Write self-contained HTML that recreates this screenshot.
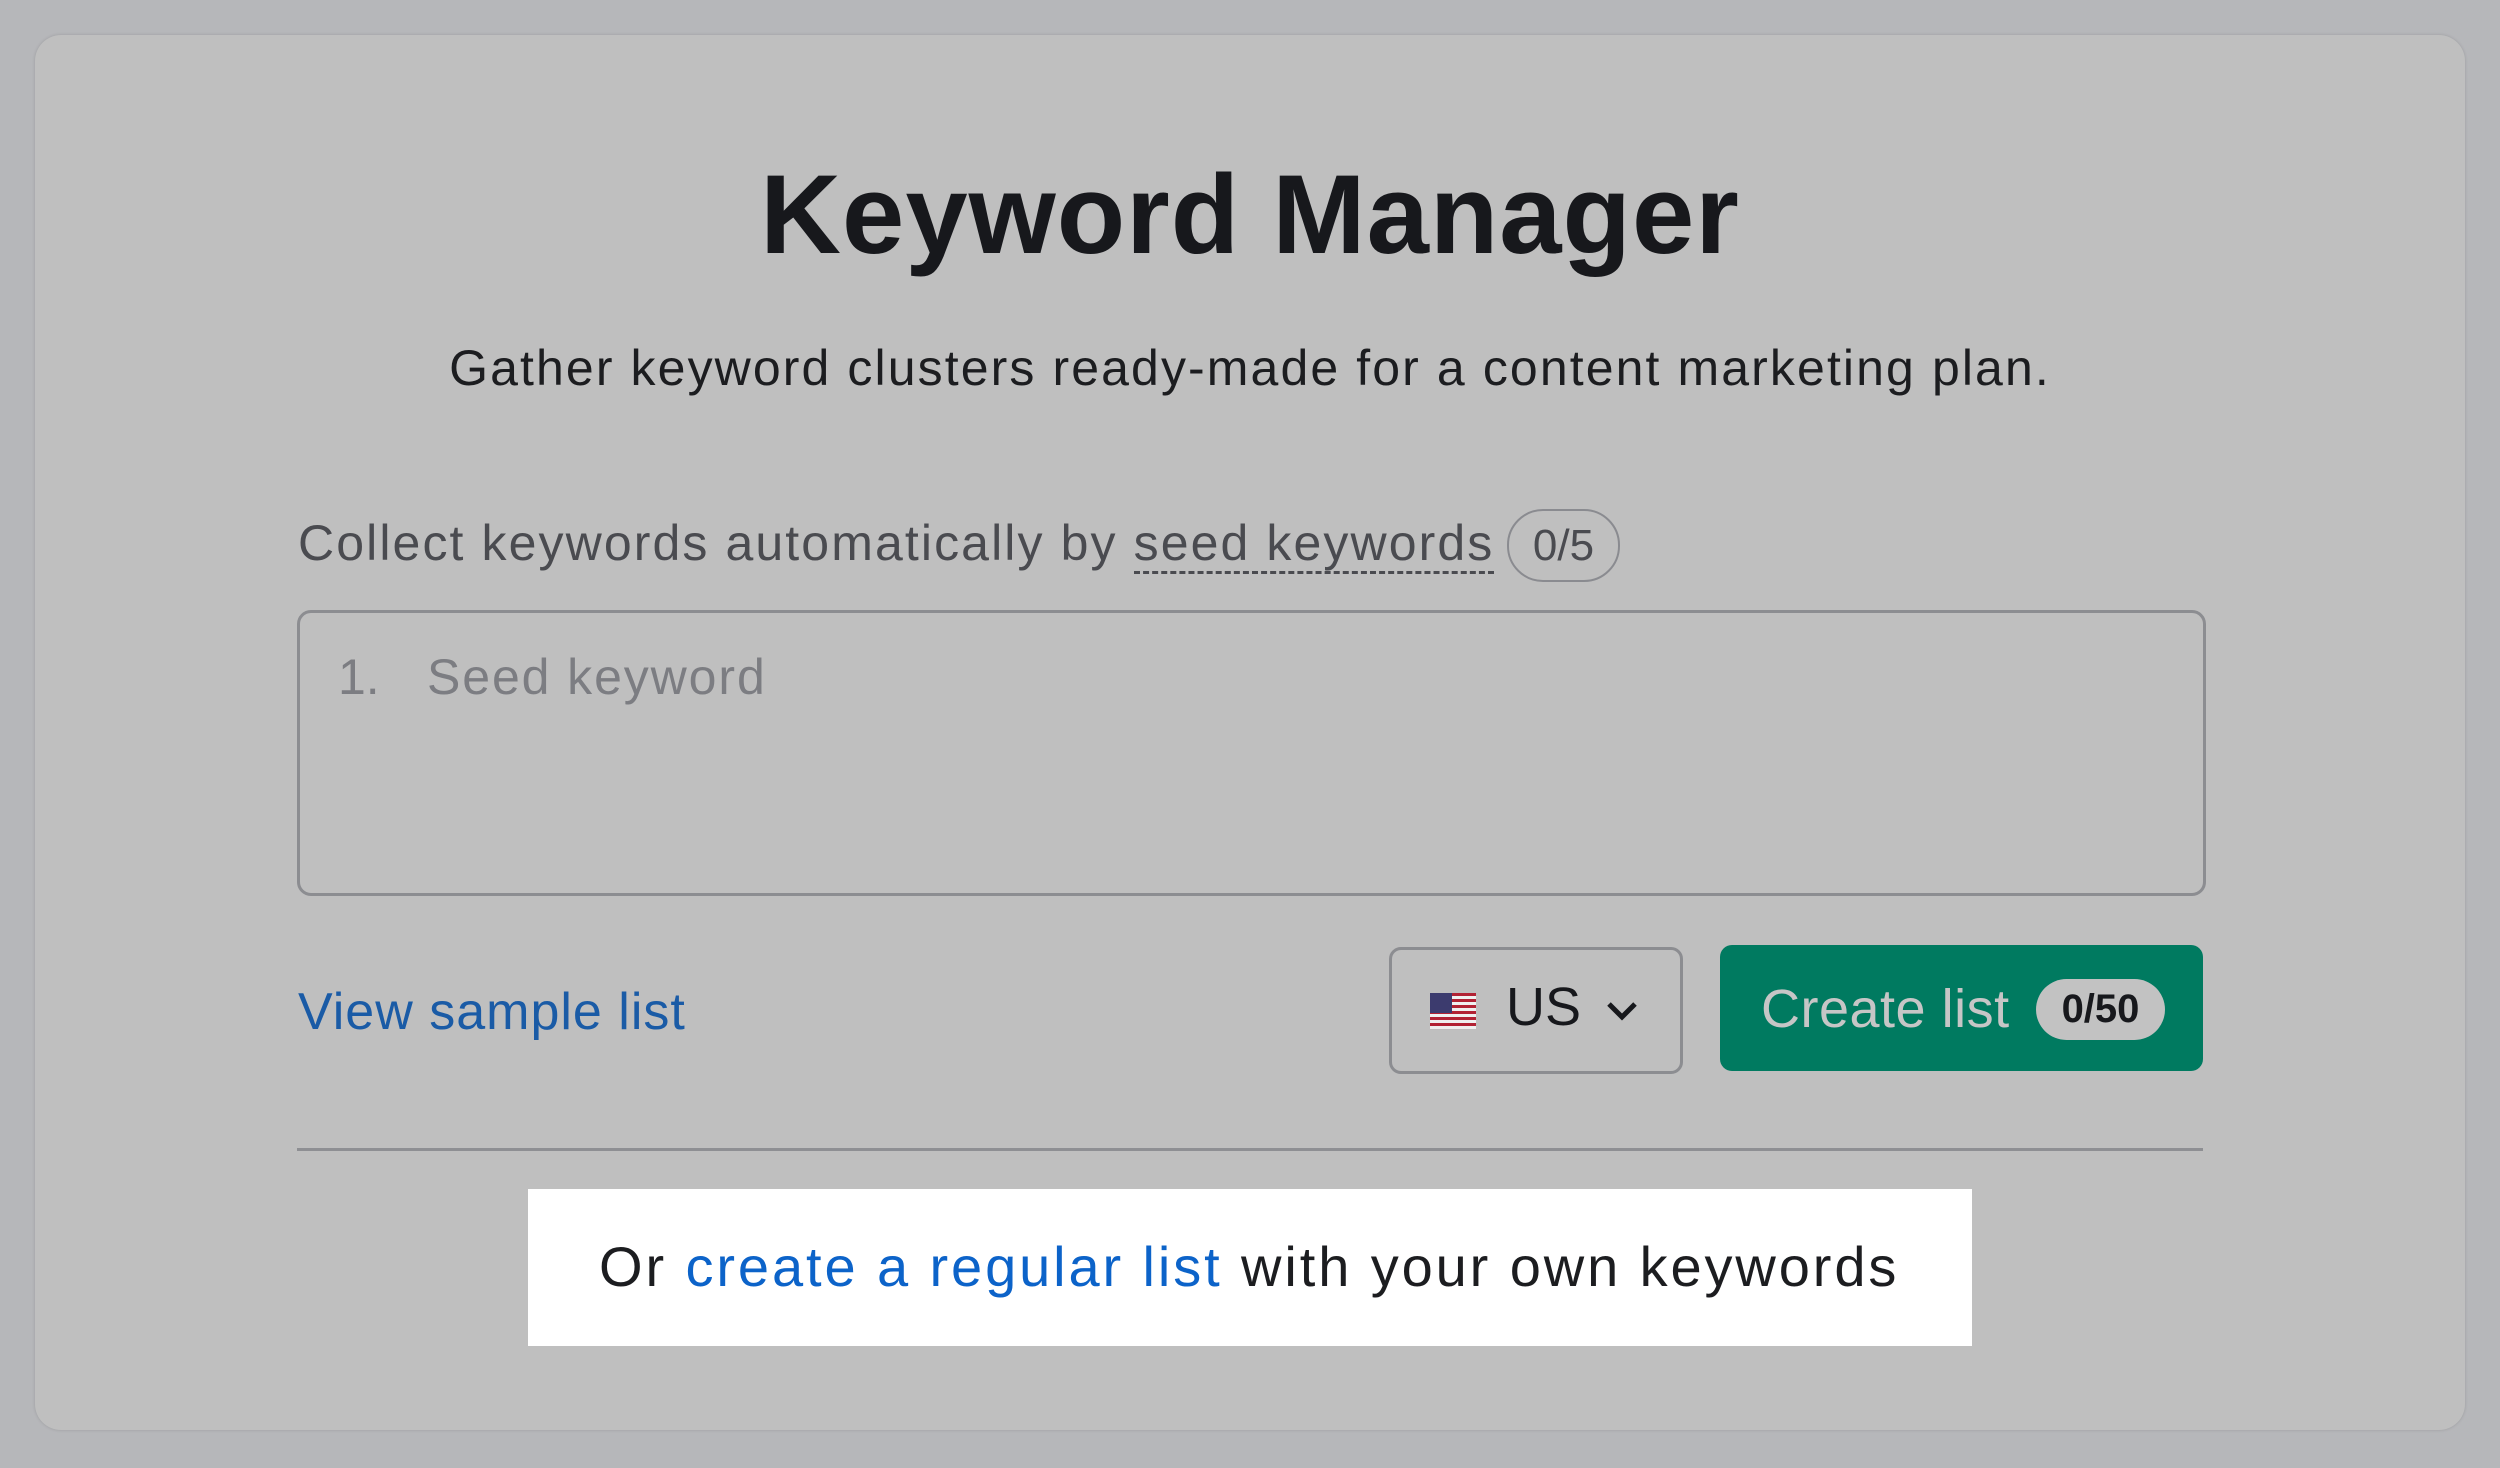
<!DOCTYPE html>
<html><head><style>
html,body{margin:0;padding:0}
body{width:2500px;height:1468px;background:#b6b7ba;position:relative;overflow:hidden;font-family:"Liberation Sans",sans-serif}
.card{position:absolute;left:35px;top:35px;width:2430px;height:1395px;background:#bfbfbf;border-radius:26px;box-shadow:0 0 3px rgba(0,0,0,.15)}
.a{position:absolute;white-space:nowrap}
</style></head><body>
<div class="card"></div>
<div class="a" style="left:0;width:2500px;text-align:center;top:150px;font-size:112px;font-weight:bold;color:#17181c;letter-spacing:1px">Keyword Manager</div>
<div class="a" style="left:0;width:2500px;text-align:center;top:339px;font-size:50px;color:#1c1d20;letter-spacing:2.1px">Gather keyword clusters ready-made for a content marketing plan.</div>
<div class="a" style="left:298px;top:514px;font-size:50px;color:#4a4b50;letter-spacing:2.1px">Collect keywords automatically by <span style="border-bottom:3px dashed #4a4b50">seed keywords</span></div>
<div class="a" style="left:1507px;top:509px;width:109px;height:69px;border:2px solid #8a8b90;border-radius:36px;text-align:center;line-height:69px;font-size:44px;color:#4a4b50">0/5</div>
<div class="a" style="left:297px;top:610px;width:1903px;height:280px;border:3px solid #8c8d91;border-radius:14px"></div>
<div class="a" style="left:338px;top:648px;font-size:50px;color:#7c7d82">1.</div>
<div class="a" style="left:427px;top:648px;font-size:50px;color:#7c7d82;letter-spacing:1.9px">Seed keyword</div>
<div class="a" style="left:298px;top:982px;font-size:52px;color:#1a5ba6;letter-spacing:1px">View sample list</div>
<div class="a" style="left:1389px;top:947px;width:288px;height:121px;border:3px solid #8c8d91;border-radius:12px"></div>
<svg class="a" style="left:1430px;top:993px" width="46" height="36" viewBox="0 0 46 36"><rect width="46" height="36" fill="#f0f0f0"/><g fill="#b22234"><rect y="0" width="46" height="3"/><rect y="6" width="46" height="3"/><rect y="12" width="46" height="3"/><rect y="18" width="46" height="3"/><rect y="24" width="46" height="3"/><rect y="30" width="46" height="3"/></g><rect width="22" height="20" fill="#3c3b6e"/></svg>
<div class="a" style="left:1506px;top:976px;font-size:54px;color:#17181c">US</div>
<svg class="a" style="left:1605px;top:1000px" width="34" height="22" viewBox="0 0 34 22"><path d="M4 4 L17 17 L30 4" fill="none" stroke="#17181c" stroke-width="5"/></svg>
<div class="a" style="left:1720px;top:945px;width:483px;height:126px;background:#007a60;border-radius:12px"></div>
<div class="a" style="left:1761px;top:978px;font-size:54px;color:#c6c6c6;letter-spacing:.5px">Create list</div>
<div class="a" style="left:2036px;top:979px;width:129px;height:61px;background:#c2c2c2;border-radius:31px;text-align:center;line-height:61px;font-size:40px;font-weight:bold;color:#17181c">0/50</div>
<div class="a" style="left:297px;top:1148px;width:1906px;height:3px;background:#8e8f93"></div>
<div class="a" style="left:528px;top:1189px;width:1444px;height:157px;background:#fff"></div>
<div class="a" style="left:599px;top:1234px;font-size:56px;color:#1c1d20;letter-spacing:2.9px">Or <span style="color:#0c63c9">create a regular list</span> with your own keywords</div>
</body></html>
